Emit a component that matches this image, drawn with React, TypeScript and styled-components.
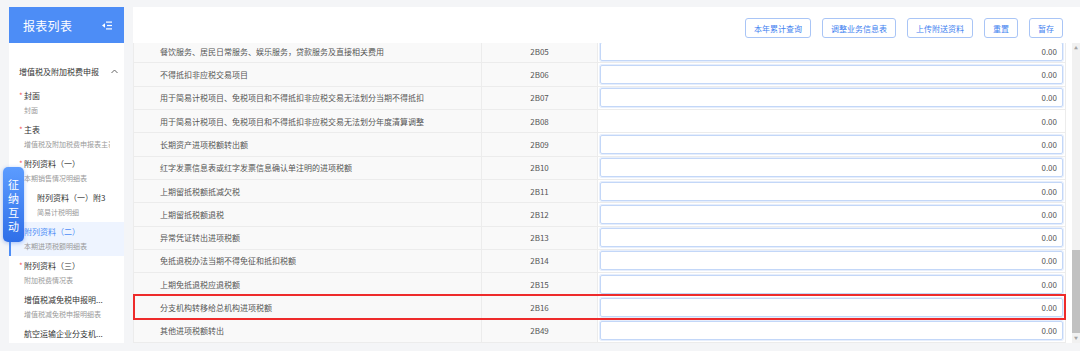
import React from 'react';
import styled, { createGlobalStyle } from 'styled-components';

type Row = { name: string; code: string; plain?: boolean; marked?: boolean };

const rows: Row[] = [
  { name: '餐饮服务、居民日常服务、娱乐服务，贷款服务及直接相关费用', code: '2B05' },
  { name: '不得抵扣非应税交易项目', code: '2B06' },
  { name: '用于简易计税项目、免税项目和不得抵扣非应税交易无法划分当期不得抵扣', code: '2B07' },
  { name: '用于简易计税项目、免税项目和不得抵扣非应税交易无法划分年度清算调整', code: '2B08', plain: true },
  { name: '长期资产进项税额转出额', code: '2B09' },
  { name: '红字发票信息表或红字发票信息确认单注明的进项税额', code: '2B10' },
  { name: '上期留抵税额抵减欠税', code: '2B11' },
  { name: '上期留抵税额退税', code: '2B12' },
  { name: '异常凭证转出进项税额', code: '2B13' },
  { name: '免抵退税办法当期不得免征和抵扣税额', code: '2B14' },
  { name: '上期免抵退税应退税额', code: '2B15' },
  { name: '分支机构转移给总机构进项税额', code: '2B16', marked: true },
  { name: '其他进项税额转出', code: '2B49' },
];

type NavItem = { title: string; sub?: string; required?: boolean; indent?: boolean; active?: boolean };

const navItems: NavItem[] = [
  { title: '封面', sub: '封面', required: true },
  { title: '主表', sub: '增值税及附加税费申报表主表', required: true },
  { title: '附列资料（一）', sub: '本期销售情况明细表', required: true },
  { title: '附列资料（一）附3', sub: '简易计税明细', indent: true },
  { title: '附列资料（二）', sub: '本期进项税额明细表', active: true },
  { title: '附列资料（三）', sub: '附加税费情况表', required: true },
  { title: '增值税减免税申报明...', sub: '增值税减免税申报明细表' },
  { title: '航空运输企业分支机...', sub: '' },
];

const buttons = ['本年累计查询', '调整业务信息表', '上传附送资料', '重置', '暂存'];

const App: React.FC = () => {
  return (
    <>
      <GlobalStyle />
      <Page>
        <Sidebar>
          <SideHeader>
            <span>报表列表</span>
            <svg width="10" height="9" viewBox="0 0 10 9">
              <path d="M0 4.5 L3 2.2 L3 6.8 Z" fill="#fff" />
              <rect x="4" y="0.5" width="6" height="1.2" fill="#fff" />
              <rect x="5" y="3.9" width="5" height="1.2" fill="#fff" />
              <rect x="4" y="7.3" width="6" height="1.2" fill="#fff" />
            </svg>
          </SideHeader>
          <NavList>
            <GroupHead>
              <span>增值税及附加税费申报</span>
              <svg width="7" height="5" viewBox="0 0 7 5">
                <path d="M0.5 4 L3.5 1 L6.5 4" stroke="#666" strokeWidth="1" fill="none" />
              </svg>
            </GroupHead>
            {navItems.map((item) => (
              <NavEntry key={item.title} $active={item.active} $indent={item.indent}>
                <NavTitle $active={item.active}>
                  {item.required && <Star>*</Star>}
                  {item.title}
                </NavTitle>
                {item.sub && <NavSub>{item.sub}</NavSub>}
              </NavEntry>
            ))}
          </NavList>
        </Sidebar>

        <Main>
          <Toolbar>
            {buttons.map((b) => (
              <ToolButton key={b}>{b}</ToolButton>
            ))}
          </Toolbar>
          <TableArea>
            <TableWrap>
              {rows.map((r) => (
                <TableRow key={r.code} $marked={r.marked}>
                  <NameCell>{r.name}</NameCell>
                  <CodeCell>{r.code}</CodeCell>
                  <ValueCell>
                    {r.plain ? <PlainValue>0.00</PlainValue> : <ValueInput>0.00</ValueInput>}
                  </ValueCell>
                </TableRow>
              ))}
            </TableWrap>
            <ScrollTrack>
              <Arrow>▲</Arrow>
              <ScrollSpace />
              <ScrollThumb />
              <Arrow>▼</Arrow>
            </ScrollTrack>
          </TableArea>
        </Main>
      </Page>

      <FloatTab>
        <span>征</span>
        <span>纳</span>
        <span>互</span>
        <span>动</span>
      </FloatTab>
    </>
  );
};

export default App;

/* ====================== Styled Components ====================== */

const GlobalStyle = createGlobalStyle`
  html, body {
    margin: 0;
    padding: 0;
    background: #f4f5f7;
    font-family: 'Noto Sans CJK SC', 'Noto Sans', sans-serif;
  }
  * { box-sizing: border-box; }
`;

const Page = styled.div`
  display: flex;
  gap: 9px;
  height: 351px;
  padding: 7px 0 8px 9px;
  overflow: hidden;
`;

const Sidebar = styled.div`
  width: 115px;
  flex-shrink: 0;
  display: flex;
  flex-direction: column;
  background: #ffffff;
  overflow: hidden;
`;

const SideHeader = styled.div`
  height: 36px;
  flex-shrink: 0;
  display: flex;
  align-items: center;
  justify-content: space-between;
  padding: 0 12px 0 14px;
  background: #4d8df6;
  color: #ffffff;
  font-size: 12px;
  letter-spacing: 0.3px;
`;

const NavList = styled.div`
  display: flex;
  flex-direction: column;
  padding-top: 14px;
`;

const GroupHead = styled.div`
  height: 29px;
  display: flex;
  align-items: center;
  justify-content: space-between;
  padding: 0 6px 0 10px;
  font-size: 8px;
  color: #333333;
`;

const NavEntry = styled.div<{ $active?: boolean; $indent?: boolean }>`
  height: 34px;
  flex-shrink: 0;
  padding: 3px 0 3px ${(p) => (p.$indent ? '23px' : '10px')};
  background: ${(p) => (p.$active ? '#eef4ff' : 'transparent')};
  border-left: 2px solid ${(p) => (p.$active ? '#4d8df6' : 'transparent')};
  white-space: nowrap;
  overflow: hidden;
`;

const NavTitle = styled.div<{ $active?: boolean }>`
  height: 14px;
  line-height: 14px;
  font-size: 8px;
  color: ${(p) => (p.$active ? '#4d8df6' : '#333333')};
  padding-left: 3px;
  position: relative;
`;

const Star = styled.span`
  position: absolute;
  left: -2px;
  top: 0;
  color: #f25c5c;
  font-size: 8px;
`;

const NavSub = styled.div`
  height: 14px;
  line-height: 14px;
  font-size: 7px;
  color: #9a9a9a;
  padding-left: 3px;
  margin-right: 14px;
  overflow: hidden;
`;

const Main = styled.div`
  flex: 1;
  display: flex;
  flex-direction: column;
  background: #ffffff;
  min-width: 0;
`;

const Toolbar = styled.div`
  height: 36px;
  flex-shrink: 0;
  display: flex;
  justify-content: flex-end;
  align-items: flex-start;
  gap: 11px;
  padding: 11px 17px 0 0;
`;

const ToolButton = styled.button`
  height: 20px;
  padding: 0 8px;
  background: #ffffff;
  border: 1px solid #a9c5f6;
  border-radius: 3px;
  color: #3f7ff0;
  font-family: 'Noto Sans CJK SC', sans-serif;
  font-size: 8px;
  cursor: pointer;
`;

const TableArea = styled.div`
  flex: 1;
  display: flex;
  gap: 6px;
  min-height: 0;
`;

const TableWrap = styled.div`
  width: 933px;
  display: flex;
  flex-direction: column;
  justify-content: flex-end;
  overflow: hidden;
`;

const TableRow = styled.div<{ $marked?: boolean }>`
  height: 23.3px;
  flex-shrink: 0;
  display: flex;
  position: relative;
  z-index: ${(p) => (p.$marked ? 1 : 0)};
  border: 1px solid #ececec;
  border-top: none;

  &::after {
    content: '';
    display: ${(p) => (p.$marked ? 'block' : 'none')};
    position: absolute;
    top: -2px;
    bottom: -1px;
    left: -1px;
    right: -1px;
    border: 2px solid #ee2b2b;
    pointer-events: none;
  }
`;

const NameCell = styled.div`
  width: 348px;
  display: flex;
  align-items: center;
  padding-left: 26px;
  background: #f9f9f9;
  border-right: 1px solid #ececec;
  font-size: 8px;
  color: #555555;
  white-space: nowrap;
`;

const CodeCell = styled.div`
  width: 116px;
  display: flex;
  align-items: center;
  justify-content: center;
  background: #f9f9f9;
  border-right: 1px solid #ececec;
  font-size: 8px;
  color: #555555;
`;

const ValueCell = styled.div`
  flex: 1;
  display: flex;
  align-items: center;
  padding: 0 2px 0 2px;
  background: #ffffff;
`;

const ValueInput = styled.div`
  flex: 1;
  height: 19px;
  display: flex;
  align-items: center;
  justify-content: flex-end;
  padding-right: 5px;
  border: 1px solid #c3d7f8;
  border-radius: 2px;
  box-shadow: 0 0 0 1px #e6eefc;
  font-size: 8px;
  color: #555555;
`;

const PlainValue = styled.div`
  flex: 1;
  text-align: right;
  padding-right: 6px;
  font-size: 8px;
  color: #555555;
`;

const ScrollTrack = styled.div`
  width: 8px;
  display: flex;
  flex-direction: column;
  align-items: center;
  background: #f1f1f1;
`;

const Arrow = styled.div`
  height: 10px;
  line-height: 10px;
  font-size: 4px;
  color: #a3a3a3;
`;

const ScrollSpace = styled.div`
  flex: 1;
`;

const ScrollThumb = styled.div`
  width: 8px;
  height: 83px;
  background: #c1c1c1;
`;

const FloatTab = styled.div`
  position: absolute;
  left: 3px;
  top: 167px;
  width: 21px;
  height: 75px;
  display: flex;
  flex-direction: column;
  align-items: center;
  justify-content: center;
  border-radius: 5px;
  background: linear-gradient(180deg, #5c9cff 0%, #2f6fe8 100%);
  box-shadow: 0 1px 4px rgba(47, 111, 232, 0.4);
  color: #ffffff;
  font-size: 11px;
  line-height: 14px;
`;
